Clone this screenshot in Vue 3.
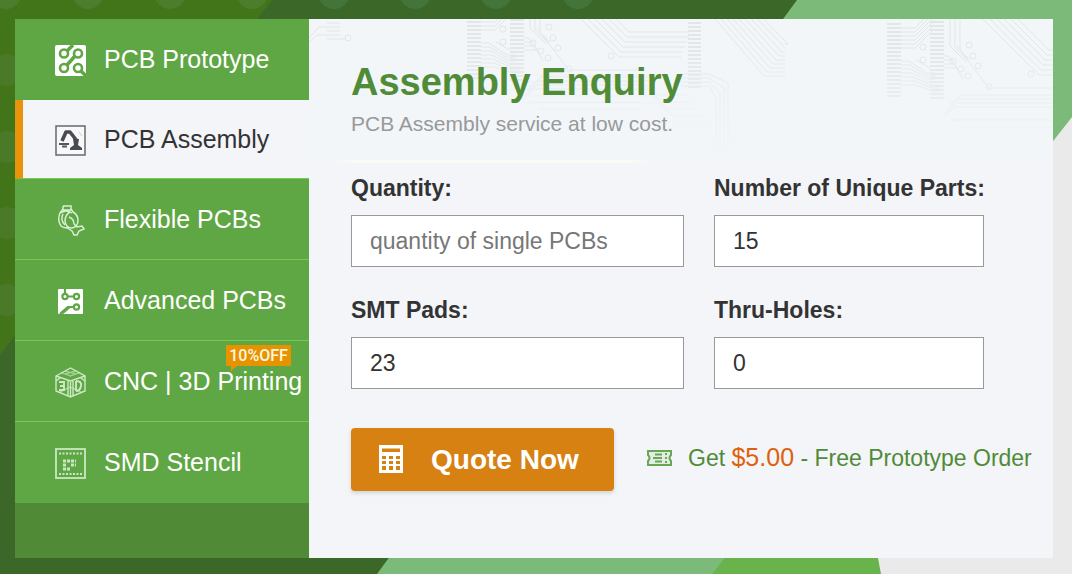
<script setup>
import { ref } from 'vue'

const items = ['PCB Prototype', 'PCB Assembly', 'Flexible PCBs', 'Advanced PCBs', 'CNC | 3D Printing', 'SMD Stencil']
const active = ref(1)
const quantity = ref('')
const parts = ref('15')
const pads = ref('23')
const holes = ref('0')

const topDots = [6, 88, 170, 252, 334, 415, 496, 578]
const sideDots = [70, 147, 223, 300]

const range = (n, f) => Array.from({ length: n }, (_, i) => f(i)).join('')
const combs = range(19, (i) => `M578 ${5 + i * 4}h14`) + range(20, (i) => `M621 ${3 + i * 4}h14`)
const links =
  range(6, (i) => `M592 ${9 + i * 4}h14l${22 - i} -${22 - i}`) +
  range(7, (i) => `M592 ${42 + i * 4}h${8 + i}l18 ${12 - i}h8`) +
  range(4, (i) => `M635 ${37 + i * 4}h${4 + i * 3}l6 ${5 + i * 2}`) +
  range(3, (i) => `M${641 + i * 5} -12v${39 + i * 2}l${16 - i * 3} ${16 - i * 3}`) +
  'M648 27l31 41M679 69h72M607 28l12-12M607 41l14 8'
const bundle = range(6, (i) => `M${654 + i * 7} -20l${76 - i * 5} ${76 - i * 5}h62`)
const lower = range(4, (i) => `M${634 + i * 2} ${98 - i * 4}l12-10h110`) + 'M640 101h112M650 108h102'
const pins = [[614, 28], [614, 41], [660, 26], [664, 37], [669, 47], [644, 42], [652, 50], [659, 57], [680, 68], [722, 55]]
const centre = range(9, (i) => `M${403 + i * 5} -${4 + i}l${52 - i * 2} ${61 - i * 3}h${21 - i * 3}`)
const middleComb = range(17, (i) => `M379 ${4 + i * 4}h13`)
const rails = range(4, (i) => `M372 ${67 - i * 4}h28l${7 + i * 4} ${12 - i}v${54 + i * 5}`)
const underTitle = range(5, (i) => `M215 ${56 + i * 7}h${110 + i * 6}l22 20h30`)
const corner = range(5, (i) => `M18 ${4 + i * 4}h13`) + 'M18 8h-8l-10 11M31 20h6M18 16H8l-10 9'
</script>

<template>
  <main class="page">
    <svg class="backdrop" viewBox="0 0 1072 574" preserveAspectRatio="none" aria-hidden="true">
      <rect width="1072" height="574" fill="#3b6828" />
      <path d="M0 0H272L0 355Z" fill="#427419" />
      <circle v-for="x in topDots" :key="'t' + x" :cx="x" cy="-7" r="16" :fill="x < 260 ? '#4c7d2c' : '#43753b'" />
      <circle v-for="y in sideDots" :key="'s' + y" cx="7" :cy="y" r="16" fill="#4a7a27" />
      <path d="M797 0H1072V574H377Z" fill="#7cba7a" />
      <path d="M1072 117V574H712Z" fill="#69b34c" />
      <path d="M1072 117V574H881L878 558L900 336Z" fill="#eaeaea" />
    </svg>

    <div class="card">
      <nav class="side" aria-label="Services">
        <button
          v-for="(label, i) in items"
          :key="label"
          type="button"
          class="item"
          :class="{ active: active === i }"
          @click="active = i"
        >
          <svg class="icon" viewBox="0 0 31 31" aria-hidden="true">
            <g v-if="i === 0">
              <rect width="31" height="31" rx="2" fill="#fff" />
              <g fill="none" stroke="#5fa644" stroke-width="2.6">
                <circle cx="9" cy="8.500" r="4" /><circle cx="23" cy="8.500" r="4" />
                <circle cx="9" cy="23" r="4" /><circle cx="23" cy="23" r="4" />
                <path d="M12 6L18 0M20 11L12 20M26 26L31 31" stroke-width="3.500" />
              </g>
            </g>
            <g v-else-if="i === 1">
              <rect x="1" y="1" width="29" height="29" fill="#f8f8fa" stroke="#686868" stroke-width="1.500" />
              <path d="M7 16L11 7L15 7L22 16" fill="none" stroke="#4a4b50" stroke-width="3.600" stroke-linejoin="round" />
              <path d="M18 14H24L23 20L27 23V25H15V23L19 20Z" fill="#4a4b50" />
              <path d="M4 19H14M7 21.500H12" stroke="#55565a" stroke-width="1.800" />
              <path d="M24 7L27 11" stroke="#ccc" />
            </g>
            <g v-else-if="i === 2" fill="none" stroke="#d9efd3" stroke-width="1.500">
              <path d="M8 1H16V4L18 7Q23 10 23 15Q23 22 17 23Q11 23 10 16Q10 10 15 7M8 1V4L5 8Q2 15 6 21Q10 24 14 22M8 5H16M6 8Q11 4 17 8M14 12Q19 14 19 19M8 9Q5 15 10 20" />
              <path d="M11 22L17 26L19 30H22L24 26L29 24L27 21L22 22L19 19" />
            </g>
            <g v-else-if="i === 3">
              <rect x="3" y="3" width="25" height="25" rx="1" fill="#fff" />
              <g fill="none" stroke="#5fa644" stroke-width="2.200">
                <circle cx="10" cy="10.500" r="2.600" /><circle cx="21.500" cy="10.500" r="2.600" /><circle cx="21.500" cy="21" r="2.600" />
                <path d="M10 3V8M13 10.500H19M19 21H13L5 28" />
                <path d="M7 27L14 21" stroke-width="3" />
              </g>
            </g>
            <g v-else-if="i === 4" fill="none" stroke="#cdeac5" stroke-width="1.400">
              <path d="M1 9L15.500 1L30 9V24L15.500 30L1 24Z" />
              <path d="M1 9L15.500 14L30 9M15.500 14V30M1 14L5 11M30 14L26 11M13 14V29M18 14V29" />
              <path d="M6 5.500L15.500 9L25 5.500M10 4L21 7M21 4L10 7M5 25L15 20L26 25" opacity="0.6" />
              <path d="M4 15H9V23H4M5 19H9M21 14V24M21 14Q27 14 26 19Q25 24 21 24" stroke-width="1.900" />
            </g>
            <g v-else fill="none" stroke="#c9e8c2">
              <rect x="1" y="1" width="29" height="29" stroke-width="1.800" />
              <path d="M4 5.500H27M4 26H27" stroke-width="2" stroke-dasharray="2 1.500" />
              <path d="M8 13H21M8 17H12M16 17H21M8 21H16" stroke-width="3" stroke-dasharray="3 1" />
            </g>
          </svg>
          <span>{{ label }}</span>
          <span v-if="i === 4" class="badge">10%OFF</span>
        </button>
      </nav>

      <section class="panel">
        <svg class="circuit" viewBox="0 0 744 144" preserveAspectRatio="xMinYMin slice" aria-hidden="true">
          <defs>
            <linearGradient id="fade" x1="0" y1="0" x2="0" y2="1">
              <stop offset="0.200" stop-color="#f2f6f9" stop-opacity="0" />
              <stop offset="0.900" stop-color="#f2f6f9" stop-opacity="0.900" />
            </linearGradient>
            <linearGradient id="glow">
              <stop offset="0" stop-color="#fafbf6" stop-opacity="0" />
              <stop offset="0.080" stop-color="#fafbf6" />
              <stop offset="0.920" stop-color="#fafbf6" />
              <stop offset="1" stop-color="#fafbf6" stop-opacity="0" />
            </linearGradient>
            <g id="chip">
              <path :d="combs" stroke-width="2" />
              <path :d="links" />
              <path :d="bundle" />
              <path :d="lower" />
              <circle v-for="(p, k) in pins" :key="k" :cx="p[0]" :cy="p[1]" r="3" />
            </g>
          </defs>
          <rect width="744" height="144" fill="#f2f6f9" />
          <g fill="none" stroke="#e3e6e8" stroke-width="1">
            <use href="#chip" />
            <svg width="380" height="144"><use href="#chip" x="-420" y="-18" /></svg>
            <path :d="centre" />
            <path :d="middleComb" stroke-width="2" />
            <path :d="rails" />
            <path :d="underTitle" stroke="#e9edf0" />
            <path :d="corner" />
            <circle cx="39" cy="19" r="3" />
          </g>
          <rect width="744" height="144" fill="url(#fade)" />
          <rect x="20" y="141" width="326" height="3" fill="url(#glow)" />
        </svg>

        <header class="head">
          <h1>Assembly Enquiry</h1>
          <p>PCB Assembly service at low cost.</p>
        </header>

        <form @submit.prevent>
          <div class="fields">
            <div class="field">
              <label for="quantity">Quantity:</label>
              <input id="quantity" v-model="quantity" type="text" placeholder="quantity of single PCBs" />
            </div>
            <div class="field">
              <label for="parts">Number of Unique Parts:</label>
              <input id="parts" v-model="parts" type="text" />
            </div>
            <div class="field">
              <label for="pads">SMT Pads:</label>
              <input id="pads" v-model="pads" type="text" />
            </div>
            <div class="field">
              <label for="holes">Thru-Holes:</label>
              <input id="holes" v-model="holes" type="text" />
            </div>
          </div>

          <div class="actions">
            <button type="submit" class="quote">
              <svg width="24" height="29" viewBox="0 0 24 29" aria-hidden="true">
                <path d="M0 0H24V28H0Z" fill="#fff" />
                <path d="M3 3.500H21V7H3ZM3 11H7V14H3ZM10 11H14V14H10ZM17 11H21V14H17ZM3 16H7V19H3ZM10 16H14V19H10ZM17 16H21V19H17ZM3 21H7V25H3ZM10 21H14V25H10ZM17 21H21V25H17Z" fill="#d78113" />
              </svg>
              <span>Quote Now</span>
            </button>
            <a class="promo" href="#">
              <svg width="25" height="16" viewBox="0 0 25 16" aria-hidden="true">
                <path d="M1 1H24V5Q21 8 24 11V15H1V11Q4 8 1 5Z" fill="#e3eee3" stroke="#69a655" stroke-width="2" />
                <path d="M8 4.500H15M6 8H15M8 11.500H15" stroke="#69a655" stroke-width="2" />
                <path d="M19 3V13" stroke="#69a655" stroke-width="2" stroke-dasharray="2 2" />
              </svg>
              <span>Get <b>$5.00</b> - Free Prototype Order</span>
            </a>
          </div>
        </form>
      </section>
    </div>
  </main>
</template>

<style>
body {
  margin: 0;
}
</style>

<style scoped>
* {
  box-sizing: border-box;
}

.page {
  position: relative;
  min-height: 100vh;
  padding: 19px 19px 16px 15px;
  font-family: "Liberation Sans", Arial, sans-serif;
  color: #333;
}

.backdrop {
  position: absolute;
  inset: 0;
  width: 100%;
  height: 100%;
}

.card {
  position: relative;
  display: grid;
  grid-template-columns: 294px 1fr;
}

.side {
  display: flex;
  flex-direction: column;
  background: #508a36;
}

.item {
  position: relative;
  display: flex;
  align-items: center;
  gap: 18px;
  height: 81px;
  padding: 0 0 0 40px;
  border: 0;
  border-bottom: 1px solid #74cb54;
  background: #5fa644;
  color: #fff;
  font: 25px "Liberation Sans", Arial, sans-serif;
  text-align: left;
  white-space: nowrap;
  cursor: pointer;
}

.item:first-child,
.item:last-child {
  border-bottom-color: #5fa644;
}

.item.active {
  height: 79px;
  padding-left: 32px;
  border-left: 8px solid #e7940c;
  background: #f3f5f9;
  color: #333;
}

.icon {
  flex: none;
  width: 31px;
  height: 33px;
  padding-top: 2px;
}

.badge {
  position: absolute;
  top: 4px;
  left: 211px;
  width: 65px;
  background: #e79300;
  color: #fff6df;
  font: 500 16px/21px Roboto, sans-serif;
  text-align: center;
}

.badge::after {
  content: "";
  position: absolute;
  top: 21px;
  left: 5px;
  border-top: 5px solid #e79300;
  border-right: 6px solid transparent;
}

.panel {
  position: relative;
  padding: 41px 0 67px 42px;
  background: #f3f5f9;
}

.circuit {
  position: absolute;
  top: 0;
  left: 0;
  width: 100%;
  height: 144px;
}

.head,
form {
  position: relative;
}

h1 {
  margin: 0 0 6px;
  color: #508b37;
  font-size: 38px;
  line-height: 44px;
}

.head p {
  margin: 0 0 36px;
  color: #999;
  font-size: 21px;
  line-height: 28px;
}

.fields {
  display: grid;
  grid-template-columns: 333fr 270fr;
  gap: 29px 30px;
  padding-right: 69px;
}

.field {
  display: flex;
  flex-direction: column;
  gap: 12px;
  min-width: 0;
}

label {
  font-size: 23px;
  font-weight: bold;
  line-height: 29px;
  white-space: nowrap;
}

input {
  width: 100%;
  height: 52px;
  padding: 0 18px;
  border: 1px solid #999;
  border-radius: 0;
  background: #fff;
  color: #333;
  font: 23px "Liberation Sans", Arial, sans-serif;
}

input::placeholder {
  color: #777;
}

.actions {
  display: flex;
  align-items: center;
  gap: 33px;
  margin-top: 39px;
}

.quote {
  display: flex;
  align-items: center;
  gap: 28px;
  width: 263px;
  height: 63px;
  padding: 0 28px;
  border: 0;
  border-radius: 4px;
  background: #d78113;
  box-shadow: 0 2px 4px rgba(0, 0, 0, 0.15);
  color: #fff;
  font: bold 28px "Liberation Sans", Arial, sans-serif;
  white-space: nowrap;
}

.promo {
  display: flex;
  align-items: center;
  gap: 16px;
  padding-bottom: 4px;
  color: #508b37;
  font-size: 23px;
  line-height: 28px;
  text-decoration: none;
  white-space: nowrap;
}

.promo b {
  color: #e0600a;
  font-size: 25px;
  font-weight: normal;
}
</style>
